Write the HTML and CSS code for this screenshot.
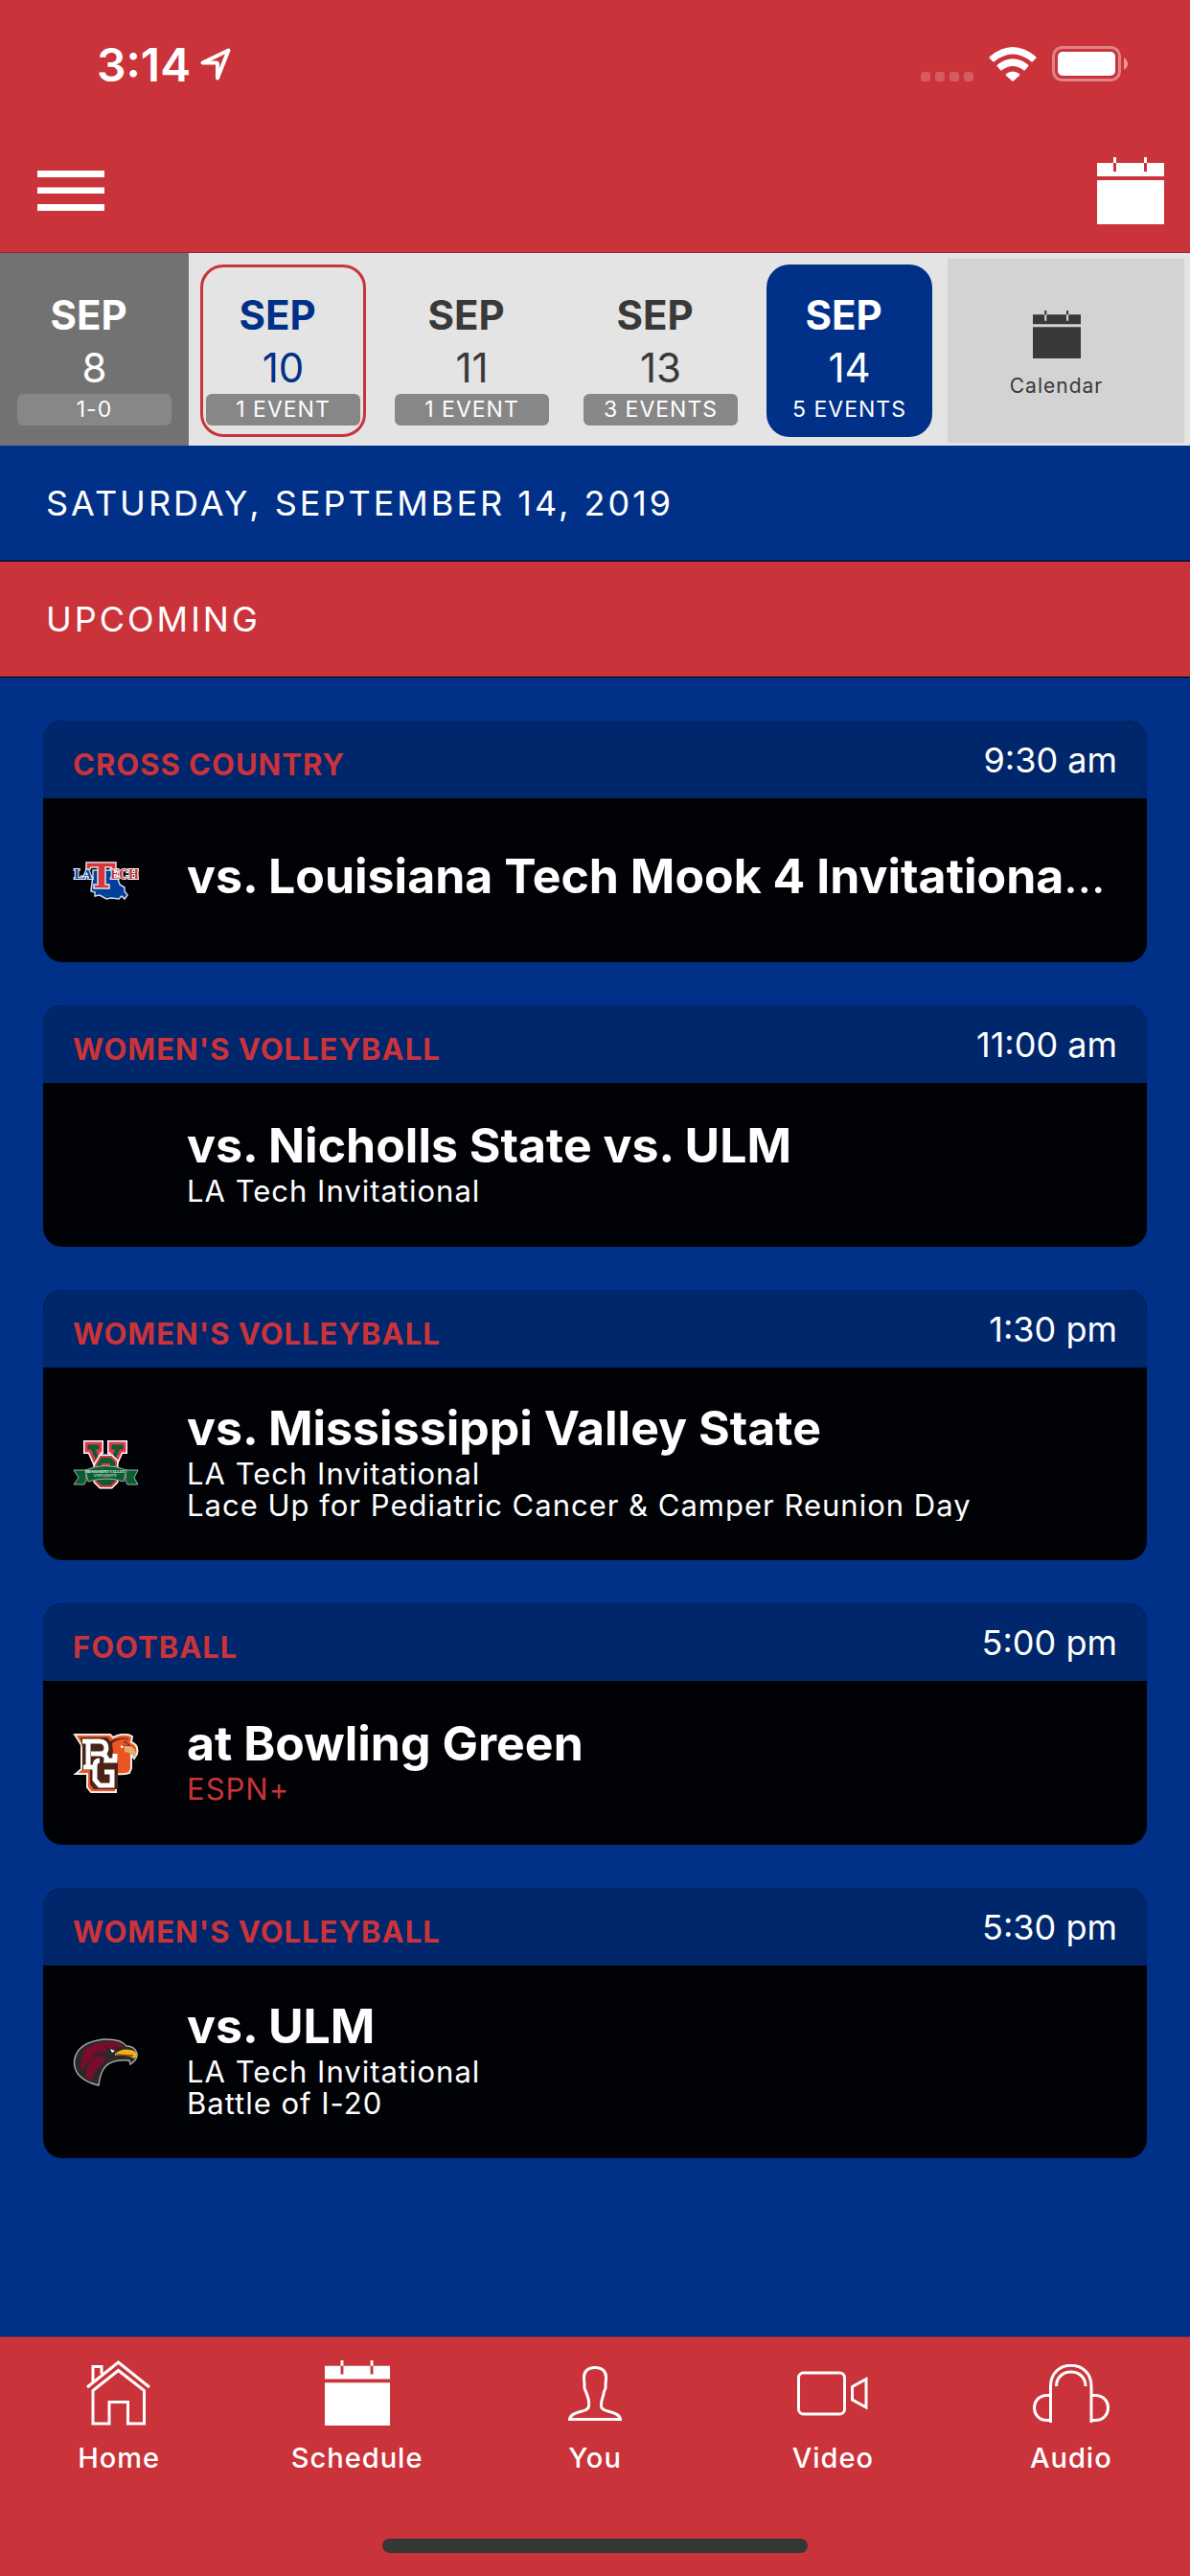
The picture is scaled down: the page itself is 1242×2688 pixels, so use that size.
FILE: index.html
```html
<!DOCTYPE html>
<html lang="en">
<head>
  <meta charset="UTF-8" />
  <meta name="viewport" content="width=device-width, initial-scale=1.0" />
  <title>Schedule</title>
  <link rel="stylesheet" href="styles.css">
</head>
<body>
  <!-- Shared calendar icon -->
  <svg class="sprite" aria-hidden="true">
    <symbol id="calendar" viewBox="0 0 70 70">
      <path fill="currentColor" d="M17 0h3v6h-3zM49 0h3v6h-3zM0 6h17v9h3V6h29v9h3V6h18v14H0zM0 24h70v46H0z" />
    </symbol>
  </svg>

  <header class="top">
    <!-- Status bar -->
    <div class="status">
      <span class="clock">3:14</span>
      <svg class="location" viewBox="0 0 32 34" width="32" height="34"><path d="M2.5 15.5 29.5 2.5 18 31.500V17Q18 15.500 16.500 15.500Z" fill="none" stroke="#fff" stroke-width="4" stroke-linejoin="round" /></svg>
      <svg class="signal" viewBox="0 0 55 36" width="55" height="36" fill="#fff" opacity="0.2">
        <rect x="0" y="26" width="10" height="10" rx="3" />
        <rect x="15" y="26" width="10" height="10" rx="3" />
        <rect x="30" y="26" width="10" height="10" rx="3" />
        <rect x="45" y="26" width="10" height="10" rx="3" />
      </svg>
      <svg class="wifi" viewBox="0 0 50 36" width="50" height="36" fill="#fff">
        <path d="M1 10Q25-10 49 10Q50 11 49 12L46 15Q45 16 44 15Q25 0 6 15Q5 16 4 15L1 12Q0 11 1 10Z" />
        <path d="M9 18.500Q25 6 41 18.500Q42 19.500 41 20.500L38 24Q37 25 36 24Q25 16 14 24Q13 25 12 24L9 20.500Q8 19.500 9 18.500Z" />
        <path d="M18 28Q25 23 32 28Q32.500 29 32 30L25 36 18 30Q17.500 29 18 28Z" />
      </svg>
      <svg viewBox="0 0 80 38" width="80" height="38" fill="#fff">
        <rect x="1.500" y="1.500" width="69" height="34" rx="9" fill="none" stroke="#fff" stroke-width="3" opacity="0.400" />
        <rect x="6" y="6" width="60" height="25" rx="5" />
        <path d="M75 12q4 3 4 6.500t-4 6.500z" opacity="0.500" />
      </svg>
    </div>
    <!-- Menu and calendar buttons -->
    <div class="toolbar">
      <button class="icon-button" aria-label="Menu">
        <svg viewBox="0 0 70 42" width="70" height="42" fill="#fff"><path d="M0 0h70v7H0zM0 17.500h70v6.500H0zM0 35h70v7H0z" /></svg>
      </button>
      <button class="icon-button" aria-label="Calendar"><svg width="70" height="70"><use href="#calendar" /></svg></button>
    </div>
  </header>

  <!-- Date strip -->
  <div class="dates">
    <button class="date past"><span class="month">SEP</span><span class="day">8</span><span class="pill">1-0</span></button>
    <button class="date today"><span class="month">SEP</span><span class="day">10</span><span class="pill">1 EVENT</span></button>
    <button class="date"><span class="month">SEP</span><span class="day">11</span><span class="pill">1 EVENT</span></button>
    <button class="date"><span class="month">SEP</span><span class="day">13</span><span class="pill">3 EVENTS</span></button>
    <button class="date selected"><span class="month">SEP</span><span class="day">14</span><span class="pill">5 EVENTS</span></button>
    <button class="calendar-tile"><svg width="50" height="50"><use href="#calendar" /></svg>Calendar</button>
  </div>

  <main>
    <h1 class="bar">SATURDAY, SEPTEMBER 14, 2019</h1>
    <h2 class="bar upcoming">UPCOMING</h2>

    <div class="events">
      <article class="card">
        <div class="card-head"><span class="sport">CROSS COUNTRY</span><span class="time">9:30 am</span></div>
        <div class="card-body">
          <div class="logo">
            <svg viewBox="0 0 69 42" width="69" height="42">
              <path d="M21 15 19 32l4 1v4l5-1 7 4 5-1 8 1 3-3 3 3 3-4-3-4V28l-5-3-3-9V10H21z" fill="#003f9e" stroke="#d5d9e4" stroke-width="1.500" />
              <g font-family="DejaVu Serif" font-weight="bold" font-size="13" stroke="#fff" stroke-width="2" paint-order="stroke">
                <text x="1" y="19" fill="#0a47a5">LA</text>
                <text x="39" y="19" font-size="12" fill="#ca333a">ECH</text>
              </g>
              <path d="M14 2h31v7h-4l-1-2h-6v18h4v4H22v-4h4V7h-7l-1 2h-4z" fill="#d6353d" stroke="#e9dfe3" stroke-width="1.500" />
            </svg>
          </div>
          <div class="info">
            <h3 class="title">vs. Louisiana Tech Mook 4 Invitationa<span class="more">…</span></h3>
          </div>
        </div>
      </article>

      <article class="card">
        <div class="card-head"><span class="sport">WOMEN'S VOLLEYBALL</span><span class="time">11:00 am</span></div>
        <div class="card-body">
          <div class="logo"></div>
          <div class="info">
            <h3 class="title">vs. Nicholls State vs. ULM</h3>
            <p>LA Tech Invitational</p>
          </div>
        </div>
      </article>

      <article class="card tall">
        <div class="card-head"><span class="sport">WOMEN'S VOLLEYBALL</span><span class="time">1:30 pm</span></div>
        <div class="card-body">
          <div class="logo">
            <svg viewBox="0 0 69 52" width="69" height="52">
              <g fill="#0b5d31">
                <path d="M14 4h15v8h-3l5 14h6l5-14h-3V4h15v8h-4L42 30H26L18 12h-4z" stroke="#fff" stroke-width="6" />
                <path d="M14 4h15v8h-3l5 14h6l5-14h-3V4h15v8h-4L42 30H26L18 12h-4z" stroke="#e3364b" stroke-width="3" />
                <path d="M29 18h11l5 5v7h-7v-4h-7v4l14 4v10l-5 5H29l-5-5v-7h7v4h7v-3l-14-4v-7z" stroke="#fff" stroke-width="5" />
                <path d="M29 18h11l5 5v7h-7v-4h-7v4l14 4v10l-5 5H29l-5-5v-7h7v4h7v-3l-14-4v-7z" stroke="#e3364b" stroke-width="2" />
                <path d="M1 32h13v11l-2 4H1l5-7zM68 32H55v11l2 4h11l-4-7z" stroke="#9fb3a4" stroke-width="1" />
                <path d="M13 32q21-9 43 0l-3 12q-18-6-37 0z" stroke="#9fb3a4" stroke-width="1" />
              </g>
              <text x="34" y="35" text-anchor="middle" font-family="Liberation Serif" font-weight="bold" font-size="4" fill="#fff">MISSISSIPPI VALLEY</text>
              <text x="34" y="39" text-anchor="middle" font-family="Liberation Serif" font-size="4" fill="#fff">UNIVERSITY</text>
            </svg>
          </div>
          <div class="info clipped">
            <h3 class="title">vs. Mississippi Valley State</h3>
            <p>LA Tech Invitational</p>
            <p>Lace Up for Pediatric Cancer &amp; Camper Reunion Day</p>
          </div>
        </div>
      </article>

      <article class="card">
        <div class="card-head"><span class="sport">FOOTBALL</span><span class="time">5:00 pm</span></div>
        <div class="card-body">
          <div class="logo">
            <svg viewBox="0 0 69 62" width="69" height="62">
              <path d="M2 1h37l3 3q12-6 20-1l-1 6q8 3 6 12l-3 5-3-4v14l-2 5q-6 2-14 1v19H19l-4-5V42H3l6-5V12z" fill="#ec5423" stroke="#f2ebe6" stroke-width="2" />
              <path d="M8 4h28l3 4q9-5 19-3l-3 4q5 2 5 5l-6-1q-8 0-12 5l-1 9h6v31H22l-4-5V38H10V14z" fill="#4b2417" />
              <path d="M41 10q8-6 17-4l-5 3q4 1 5 3-9 0-16 7zM46 24q4-7 12-8l-2 9v12l-7 3z" fill="#ec5423" />
              <path d="M54 13q9-2 12 7l-1 5q-5-6-11-6z" fill="#ddb072" />
              <path d="m50 12 4 2-4 1z" fill="#fff" />
              <path fill="none" stroke="#fff" stroke-width="5" d="M10 8h18q7 0 7 8-1 5-6 5H19M16 8v27M11 35h10M29 21q7 1 6 7h9v-7M28 28q-5 0-5 6v14l5 6h13V40h-8" />
            </svg>
          </div>
          <div class="info">
            <h3 class="title">at Bowling Green</h3>
            <p class="network">ESPN+</p>
          </div>
        </div>
      </article>

      <article class="card tall">
        <div class="card-head"><span class="sport">WOMEN'S VOLLEYBALL</span><span class="time">5:30 pm</span></div>
        <div class="card-body">
          <div class="logo">
            <svg viewBox="0 0 69 50" width="69" height="50">
              <path d="M27 49Q13 46 6 38 0 30 2 21 6 4 32 1 50 0 56 8q9 0 11 8 1 6-7 11l-1-4q-22-2-28 11-3 6-4 15z" fill="#2b2829" stroke="#a6a5a8" stroke-width="1.500" />
              <path d="M9 20Q12 7 31 4q18-2 22 5-9 0-13-1l8 4q-10-1-15-4l4 6q-13 0-19 5 9-1 18 1-5 6-13 15-3 4-2 10-6-3-8-6 1-9 8-17-8 4-11 12-3-5 0-14z" fill="#7b0b2c" />
              <path d="M44 16q7-6 16-4 7 1 7 7l-3 2q-8-5-20-3z" fill="#f3b01b" />
              <path d="m45 17 18 1" stroke="#745112" stroke-width="1.500" />
              <path d="m39 11 5 2-3 2z" fill="#fff" />
            </svg>
          </div>
          <div class="info">
            <h3 class="title">vs. ULM</h3>
            <p>LA Tech Invitational</p>
            <p>Battle of I-20</p>
          </div>
        </div>
      </article>
    </div>
  </main>

  <!-- Bottom tabs -->
  <footer class="bottom">
    <nav class="tabs">
      <a href="#">
        <span class="tab-icon"><svg viewBox="0 0 68 68" width="68" height="68"><path d="M1 28 33.500 2 66 28M7 23V6.500h9V14M7 66V31.500L33.500 10.500 60.500 31.500V66h-17V43.500H24V66Z" /></svg></span>
        Home
      </a>
      <a href="#">
        <span class="tab-icon"><svg class="solid" width="68" height="68"><use href="#calendar" /></svg></span>
        Schedule
      </a>
      <a href="#">
        <span class="tab-icon"><svg viewBox="0 0 56 57" width="56" height="57"><path d="M28 1.500C20 1.500 16 6 16.500 13L17 20C16 24 19 26 20 31 22 35 22 37 21.500 42 21 49 3 46 1.500 55.500H54.500C53 46 35 49 34.500 42 34 36 36 34 37 29 37 25 40 24 39 20L39.500 13C40 6 36 1.500 28 1.500Z" /></svg></span>
        You
      </a>
      <a href="#">
        <span class="tab-icon"><svg viewBox="0 0 75 47" width="75" height="47"><rect x="1.500" y="2" width="48" height="43" rx="5" /><path d="M57.500 16.500 72 8.500V38L57.500 30Z" /></svg></span>
        Video
      </a>
      <a href="#">
        <span class="tab-icon"><svg viewBox="0 0 80 61" width="80" height="61"><path d="M18.500 61V23C18.500-6 61 -6 61 23V61M24.500 23C24.500 3 55 3 55 23M18.500 32.500H15C-3 32.500-3 58.500 15 58.500H18.500M61 32.500H65C83 32.500 83 58.500 65 58.500H61" /></svg></span>
        Audio
      </a>
    </nav>
    <div class="home-indicator"></div>
  </footer>
</body>
</html>
```
FILE: styles.css
```css
:root {
  --red: #ca333a;
  --blue: #003087;
  --dark: #393939;
}
* {
  box-sizing: border-box;
}
body {
  margin: 0;
  min-height: 100vh;
  display: flex;
  flex-direction: column;
  font-family: Inter, "Liberation Sans", sans-serif;
  background-color: var(--blue);
  color: #fff;
}
h1, h2, h3, p {
  margin: 0;
}
button {
  margin: 0;
  padding: 0;
  border: none;
  background: none;
  font-family: inherit;
  color: inherit;
  cursor: pointer;
}
svg {
  display: block;
}
.sprite {
  position: absolute;
  width: 0;
  height: 0;
}

/* Header */
.top {
  background-color: var(--red);
  border-bottom: 1px solid #8f2b35;
}
.status {
  display: flex;
  align-items: center;
  height: 134px;
  padding: 0 64px 0 101px;
}
.clock {
  font-size: 48px;
  font-weight: 600;
}
.location {
  margin-left: 10px;
}
.signal {
  margin-left: auto;
}
.wifi {
  margin: 0 16px;
}
.toolbar {
  display: flex;
  justify-content: space-between;
  align-items: center;
  height: 129px;
  padding: 0 27px 0 39px;
}

/* Date strip */
.dates {
  display: flex;
  height: 201px;
  background-color: #e4e4e4;
  color: var(--dark);
}
.date {
  width: 197px;
  position: relative;
  z-index: 0;
  display: flex;
  flex-direction: column;
  align-items: center;
  padding-top: 38px;
}
.month {
  padding-right: 12px;
  font-size: 42px;
  line-height: 54px;
  font-weight: 700;
}
.day {
  font-size: 42px;
  line-height: 55px;
}
.pill {
  width: 161px;
  border-radius: 6px;
  background-color: #878787;
  color: #fff;
  font-size: 23px;
  line-height: 33px;
  letter-spacing: 1px;
}
.past {
  background-color: #727272;
  color: #fff;
}
.today {
  color: var(--blue);
}
.today::before,
.selected::before {
  content: "";
  position: absolute;
  z-index: -1;
  inset: 12px 12px 9px;
  border-radius: 24px;
}
.today::before {
  border: 3px solid var(--red);
}
.selected {
  color: #fff;
}
.selected::before {
  background-color: var(--blue);
}
.selected .pill {
  background: none;
}
.calendar-tile {
  flex: 1;
  display: flex;
  flex-direction: column;
  align-items: center;
  gap: 14px;
  margin: 6px 6px 3px 4px;
  padding: 54px 20px 0 0;
  background-color: #d3d3d3;
  font-size: 21px;
  line-height: 30px;
  letter-spacing: 1px;
}

/* Schedule */
main {
  flex: 1;
}
.bar {
  padding: 0 48px;
  border-bottom: 1px solid #000;
  font-size: 36px;
  line-height: 120px;
  font-weight: 400;
  letter-spacing: 3px;
}
.upcoming {
  background-color: var(--red);
}
.events {
  display: flex;
  flex-direction: column;
  gap: 45px;
  padding: 45px;
}
.card {
  border-radius: 20px;
  overflow: hidden;
  background-color: #000206;
}
.card-head {
  display: flex;
  justify-content: space-between;
  height: 81px;
  padding: 0 31px;
  background-color: #00266b;
}
.sport {
  color: var(--red);
  font-size: 31px;
  line-height: 92px;
  font-weight: 700;
  letter-spacing: 1px;
}
.time {
  font-size: 36px;
  line-height: 83px;
}
.card-body {
  display: flex;
  align-items: center;
  height: 171px;
  padding: 0 31px;
}
.tall .card-body {
  height: 201px;
}
.logo {
  width: 69px;
  margin-right: 50px;
}
.info {
  flex: 1;
  min-width: 0;
  margin-bottom: 9px;
}
.clipped {
  overflow: hidden;
}
.title {
  white-space: nowrap;
  font-size: 50px;
  line-height: 62px;
  font-weight: 700;
}
.more {
  font-weight: 400;
}
.info p {
  font-size: 31px;
  line-height: 33px;
  letter-spacing: 1px;
}
.info .network {
  color: var(--red);
}

/* Bottom tabs */
.bottom {
  background-color: var(--red);
  border-top: 1px solid #8f2b45;
}
.tabs {
  display: flex;
}
.tabs a {
  flex: 1;
  display: flex;
  flex-direction: column;
  align-items: center;
  gap: 16px;
  padding-top: 24px;
  color: #fff;
  text-decoration: none;
  font-size: 29px;
  line-height: 36px;
  font-weight: 500;
  letter-spacing: 1px;
}
.tab-icon {
  display: flex;
  align-items: center;
  height: 68px;
}
.tab-icon svg {
  fill: none;
  stroke: #fff;
  stroke-width: 3;
}
.tab-icon .solid {
  stroke: none;
}
.home-indicator {
  width: 444px;
  height: 15px;
  margin: 66px auto 24px;
  border-radius: 8px;
  background-color: #363636;
}
```
